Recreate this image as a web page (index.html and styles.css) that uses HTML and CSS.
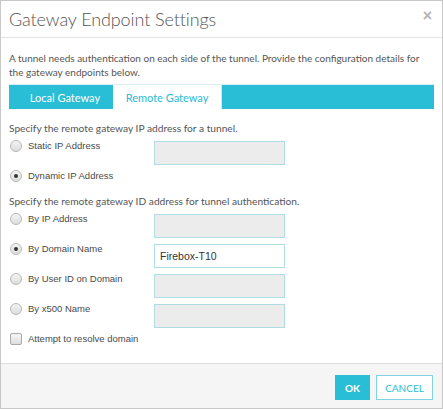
FILE: index.html
```html
<!DOCTYPE html>
<html>
<head>
<meta charset="utf-8">
<link rel="stylesheet" href="styles.css">
</head>
<body>
<div class="modal">
  <div class="header">
    <h1 class="title">Gateway Endpoint Settings</h1>
    <span class="close">&#215;</span>
  </div>
  <div class="body">
    <p class="intro">A tunnel needs authentication on each side of the tunnel. Provide the configuration details for the gateway endpoints below.</p>
    <div class="tabs">
      <div class="tab first">Local Gateway</div>
      <div class="tab active">Remote Gateway</div>
    </div>
    <p class="section">Specify the remote gateway IP address for a tunnel.</p>
    <div class="row">
      <label class="opt"><span class="radio"></span>Static IP Address</label>
      <div class="field disabled"></div>
    </div>
    <div class="row">
      <label class="opt"><span class="radio on"></span>Dynamic IP Address</label>
    </div>
    <p class="section second">Specify the remote gateway ID address for tunnel authentication.</p>
    <div class="row">
      <label class="opt"><span class="radio"></span>By IP Address</label>
      <div class="field disabled"></div>
    </div>
    <div class="row">
      <label class="opt"><span class="radio on"></span>By Domain Name</label>
      <div class="field">Firebox-T10</div>
    </div>
    <div class="row">
      <label class="opt"><span class="radio"></span>By User ID on Domain</label>
      <div class="field disabled"></div>
    </div>
    <div class="row">
      <label class="opt"><span class="radio"></span>By x500 Name</label>
      <div class="field disabled"></div>
    </div>
    <div class="row check-row">
      <label class="opt"><span class="checkbox"></span>Attempt to resolve domain</label>
    </div>
  </div>
  <div class="footer">
    <button class="btn primary">OK</button>
    <button class="btn secondary">CANCEL</button>
  </div>
</div>
</body>
</html>
```

FILE: styles.css
```css
html, body {
  margin: 0;
  padding: 0;
  background: #fff;
}

.modal {
  width: 443px;
  height: 409px;
  box-sizing: border-box;
  border: 1px solid #c8c8c8;
  display: flex;
  flex-direction: column;
  background: #fff;
  font-family: Lato, "Open Sans", sans-serif;
  color: #555;
}

.header {
  height: 36px;
  border-bottom: 1px solid #e3e3e3;
  display: flex;
  align-items: center;
  justify-content: space-between;
  padding: 0 10px 0 8px;
}

.title {
  margin: 0;
  font-family: Lato, sans-serif;
  font-weight: 300;
  font-size: 18px;
  color: #555;
  letter-spacing: -0.1px;
}

.close {
  font-family: "Liberation Sans", sans-serif;
  font-size: 16px;
  color: #b5b5b5;
  font-weight: bold;
  margin-top: -6px;
}

.body {
  flex: 1;
  padding: 13px 8px 0 8px;
}

.intro {
  margin: 0;
  font-size: 10px;
  line-height: 14px;
  color: #555;
}

.tabs {
  margin-top: 5px;
  height: 25px;
  background: #29bdd6;
  display: flex;
  border-top: 1px solid #d8f0f5;
  box-sizing: border-box;
}

.tab {
  width: 104px;
  display: flex;
  align-items: center;
  justify-content: center;
  color: #fff;
  font-size: 11px;
  box-sizing: border-box;
}

.tab.first {
  padding-left: 8px;
}

.tab.active {
  width: 109px;
  background: #fff;
  color: #29bdd6;
  border-right: 1px solid #e0e0e0;
}

.section {
  margin: 12px 0 6px 0;
  font-size: 10.2px;
  line-height: 14px;
  color: #555;
}

.section.second {
  margin-top: 11px;
  margin-bottom: 6px;
}

.row {
  display: flex;
  align-items: flex-start;
  margin-bottom: 6px;
}

.check-row {
  margin-top: 3px;
}

.opt {
  width: 145px;
  display: flex;
  align-items: center;
  font-family: "Liberation Sans", Arial, sans-serif;
  font-size: 9.5px;
  line-height: 14px;
  color: #4a4a4a;
  margin-top: -2px;
}

.radio {
  width: 10px;
  height: 10px;
  border-radius: 50%;
  border: 1px solid #b9b9b9;
  background: linear-gradient(#f4f4f4, #dcdcdc);
  margin: 0 6px 0 1px;
  box-sizing: content-box;
  position: relative;
  flex: none;
}

.radio.on::after {
  content: "";
  position: absolute;
  left: 3px;
  top: 3px;
  width: 4px;
  height: 4px;
  border-radius: 50%;
  background: #333;
}

.checkbox {
  width: 10px;
  height: 10px;
  border-radius: 2px;
  border: 1px solid #a9a9a9;
  background: linear-gradient(#f6f6f6, #dedede);
  margin: 0 6px 0 1px;
  flex: none;
}

.field {
  width: 131px;
  height: 24px;
  box-sizing: border-box;
  border: 1px solid #aedde6;
  background: #fff;
  font-family: "Liberation Sans", Arial, sans-serif;
  font-size: 10.5px;
  color: #333;
  display: flex;
  align-items: center;
  padding-left: 5px;
}

.field.disabled {
  background: #ececec;
}

.footer {
  height: 45px;
  box-sizing: border-box;
  border-top: 1px solid #dedede;
  background: #f5f5f5;
  display: flex;
  justify-content: flex-end;
  align-items: flex-start;
  padding: 11px 9px 0 0;
  gap: 6px;
}

.btn {
  height: 25px;
  font-family: Lato, "Open Sans", sans-serif;
  font-size: 10px;
  font-weight: bold;
  box-sizing: border-box;
  cursor: pointer;
}

.btn.primary {
  width: 35px;
  background: #29bdd6;
  border: 1px solid #29bdd6;
  color: #fff;
}

.btn.secondary {
  width: 57px;
  background: #fff;
  border: 1px solid #7fd3e3;
  color: #29bdd6;
  font-weight: normal;
}
```
